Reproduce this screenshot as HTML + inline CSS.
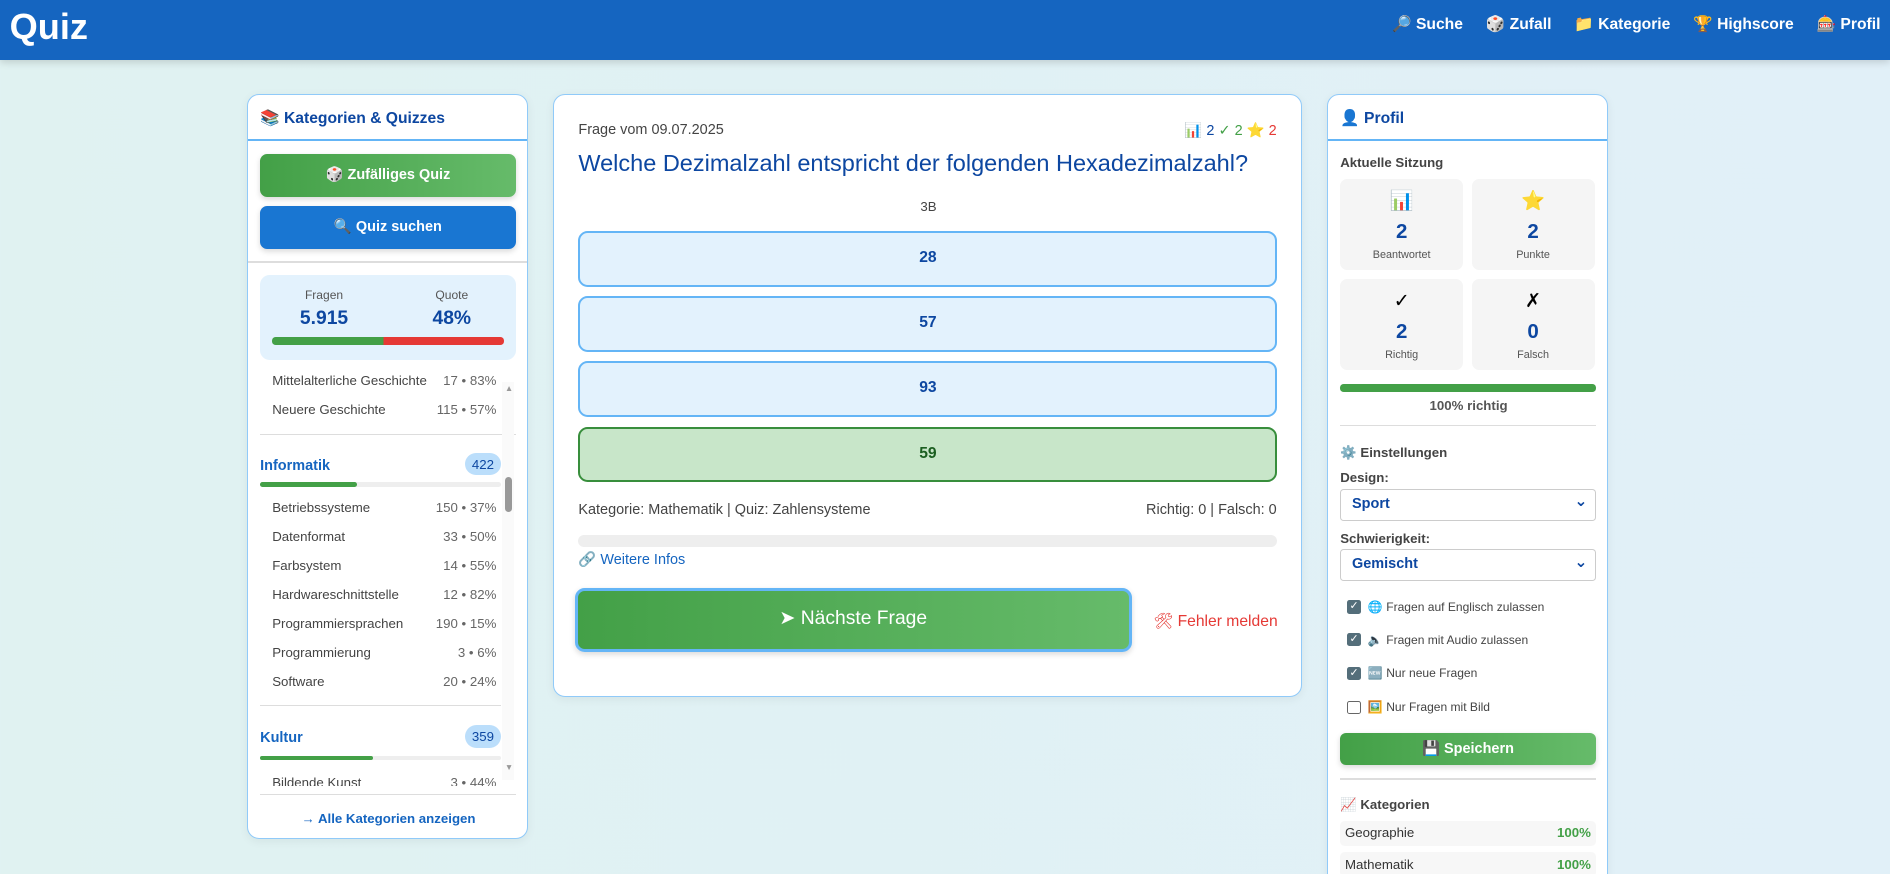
<!DOCTYPE html>
<html><head><meta charset="utf-8"><style>
*{box-sizing:border-box;margin:0;padding:0}
html,body{width:1890px;height:874px;overflow:hidden}
body{font-family:"Liberation Sans","DejaVu Sans",sans-serif;background:linear-gradient(90deg,#e0f2f1,#e1f0f8);}
#w{zoom:1.2054;width:1568px;height:725px;position:relative}
.hdr{position:absolute;left:0;top:0;width:1568px;height:50px;background:#1565c0;box-shadow:0 2px 6px rgba(0,0,0,.15)}
.logo{position:absolute;left:8px;top:5px;color:#fff;font-weight:bold;font-size:30px}
.nav{position:absolute;right:8px;top:12px;color:#fff;font-weight:bold;font-size:13px;display:flex;gap:19px}
.panel{position:absolute;background:#fff;border:1px solid #90caf9;border-radius:10px;box-shadow:0 2px 8px rgba(0,0,0,.06);overflow:hidden}
.ph{height:38px;border-bottom:2px solid #64b5f6;padding:11px 10px;font-weight:bold;font-size:13px;color:#0d47a1}
.a{position:absolute}
.btn{position:absolute;border-radius:6px;color:#fff;font-weight:bold;font-size:12px;text-align:center;box-shadow:0 2px 5px rgba(0,0,0,.15)}
.g{background:linear-gradient(90deg,#43a047,#66bb6a)}
.item{position:absolute;left:20px;width:186px;font-size:11px;color:#444;display:flex;justify-content:space-between}
.item span:last-child{color:#666}
.cat{position:absolute;left:10px;width:200px;font-size:12px;font-weight:bold;color:#1565c0}
.badge{position:absolute;right:0;top:-4px;background:#bbdefb;border-radius:10px;padding:3px 6px;font-size:11px;font-weight:normal;color:#0d47a1}
.bar{position:absolute;left:10px;width:200px;height:4px;background:#eee;border-radius:2px}
.bar i{display:block;height:4px;background:#43a047;border-radius:2px}
.hr{position:absolute;left:10px;width:212px;height:1px;background:#ddd}
.opt{position:absolute;left:20px;width:580px;height:46px;background:#e3f2fd;border:2px solid #64b5f6;border-radius:8px;text-align:center;line-height:42px;font-weight:bold;font-size:13px;color:#0d47a1}
.card{position:absolute;width:102px;height:75px;background:#f5f5f5;border-radius:6px;text-align:center}
.card .ic{margin-top:8px;font-size:16px;height:20px}
.card .n{font-size:17px;font-weight:bold;color:#0d47a1;margin-top:6px}
.card .l{font-size:9px;color:#555;margin-top:4px}
.lbl{position:absolute;left:10px;font-size:11px;font-weight:bold;color:#444}
.sel{position:absolute;left:10px;width:212px;height:26px;border:1px solid #ccc;border-radius:3px;font-size:12px;font-weight:bold;color:#0d47a1;padding:5px 9px}
.sel:after{content:"⌄";position:absolute;right:6px;top:1px;font-size:13px;font-weight:bold;color:#0d47a1}
.chk{position:absolute;left:16px;font-size:10px;color:#444;display:flex;align-items:center;gap:6px}
.chk b{display:inline-block;width:11px;height:11px;border-radius:2px;background:#546e7a;color:#fff;font-size:9px;line-height:11px;text-align:center}
.chk b.off{background:#fff;border:1px solid #666}
.row{position:absolute;left:10px;width:212px;height:21px;background:#f7f7f7;border-radius:4px;font-size:11px;color:#333;padding:4px 4px;display:flex;justify-content:space-between}
.row span:last-child{color:#43a047;font-weight:bold}
</style></head><body><div id="w">
<div class="hdr"><div class="logo">Quiz</div>
<div class="nav"><span>🔎 Suche</span><span>🎲 Zufall</span><span>📁 Kategorie</span><span>🏆 Highscore</span><span>🎰 Profil</span></div></div>

<div class="panel" style="left:205px;top:78px;width:233px;height:618px">
<div class="ph">📚 Kategorien &amp; Quizzes</div>
<div class="btn g" style="left:10px;top:49px;width:212px;height:36px;line-height:36px">🎲 Zufälliges Quiz</div>
<div class="btn" style="left:10px;top:92px;width:212px;height:36px;line-height:36px;background:#1976d2">🔍 Quiz suchen</div>
<div class="a" style="left:0;top:138px;width:233px;height:1px;background:#ddd"></div>
<div class="a" style="left:10px;top:149px;width:212px;height:71px;background:#e3f2fd;border-radius:8px">
<div class="a" style="left:0;top:11px;width:106px;text-align:center;font-size:10px;color:#555">Fragen</div>
<div class="a" style="left:106px;top:11px;width:106px;text-align:center;font-size:10px;color:#555">Quote</div>
<div class="a" style="left:0;top:28px;width:106px;text-align:center;font-size:16px;font-weight:bold;color:#0d47a1">5.915</div>
<div class="a" style="left:106px;top:28px;width:106px;text-align:center;font-size:16px;font-weight:bold;color:#0d47a1">48%</div>
<div class="a" style="left:10px;top:52px;width:192px;height:6px;border-radius:3px;background:linear-gradient(90deg,#43a047 48%,#e53935 48%)"></div>
</div>
<div class="a" style="left:0;top:228px;width:233px;height:345px;overflow:hidden">
<div class="item" style="top:3px"><span>Mittelalterliche Geschichte</span><span>17 • 83%</span></div>
<div class="item" style="top:27px"><span>Neuere Geschichte</span><span>115 • 57%</span></div>
<div class="hr" style="top:53px"></div>
<div class="cat" style="top:73px">Informatik<span class="badge">422</span></div>
<div class="bar" style="top:93px"><i style="width:40%"></i></div>
<div class="item" style="top:108px"><span>Betriebssysteme</span><span>150 • 37%</span></div>
<div class="item" style="top:132px"><span>Datenformat</span><span>33 • 50%</span></div>
<div class="item" style="top:156px"><span>Farbsystem</span><span>14 • 55%</span></div>
<div class="item" style="top:180px"><span>Hardwareschnittstelle</span><span>12 • 82%</span></div>
<div class="item" style="top:204px"><span>Programmiersprachen</span><span>190 • 15%</span></div>
<div class="item" style="top:228px"><span>Programmierung</span><span>3 • 6%</span></div>
<div class="item" style="top:252px"><span>Software</span><span>20 • 24%</span></div>
<div class="hr" style="top:278px;width:200px"></div>
<div class="cat" style="top:299px">Kultur<span class="badge">359</span></div>
<div class="bar" style="top:320px"><i style="width:47%"></i></div>
<div class="item" style="top:336px"><span>Bildende Kunst</span><span>3 • 44%</span></div>
<div class="a" style="left:211px;top:10px;width:10px;height:330px;background:#fafafa"></div>
<div class="a" style="left:213px;top:11px;font-size:7px;color:#999">▲</div>
<div class="a" style="left:213px;top:325px;font-size:7px;color:#999">▼</div>
<div class="a" style="left:213px;top:89px;width:6px;height:29px;border-radius:3px;background:#999"></div>
</div>
<div class="hr" style="top:580px"></div>
<div class="a" style="left:0;top:594px;width:233px;text-align:center;font-size:11px;font-weight:bold;color:#1565c0">→ Alle Kategorien anzeigen</div>
</div>

<div class="panel" style="left:459px;top:78px;width:621px;height:500px">
<div class="a" style="left:20px;top:22px;font-size:12px;color:#444">Frage vom 09.07.2025</div>
<div class="a" style="right:20px;top:22px;font-size:12px;color:#0d47a1">📊 2 <span style="color:#43a047">✓ 2</span> ⭐ <span style="color:#e53935">2</span></div>
<div class="a" style="left:20px;top:46px;font-size:19.5px;color:#0d47a1">Welche Dezimalzahl entspricht der folgenden Hexadezimalzahl?</div>
<div class="a" style="left:0;top:86px;width:621px;text-align:center;font-size:11px;color:#444">3B</div>
<div class="opt" style="top:113px">28</div>
<div class="opt" style="top:167px">57</div>
<div class="opt" style="top:221px">93</div>
<div class="opt" style="top:275px;background:#c8e6c9;border-color:#388e3c;color:#1b5e20">59</div>
<div class="a" style="left:20px;top:338px;font-size:12px;color:#444">Kategorie: Mathematik | Quiz: Zahlensysteme</div>
<div class="a" style="right:20px;top:338px;font-size:12px;color:#444">Richtig: 0 | Falsch: 0</div>
<div class="a" style="left:20px;top:365px;width:580px;height:10px;background:#eee;border-radius:5px"></div>
<div class="a" style="left:20px;top:378px;font-size:12px;color:#1565c0"><span style="color:#999">🔗</span> Weitere Infos</div>
<div class="btn g" style="left:17px;top:409px;width:462px;height:53px;line-height:47px;border:3px solid #64b5f6;border-radius:8px;font-size:16px;font-weight:normal">➤ Nächste Frage</div>
<div class="a" style="left:497px;top:428px;font-size:13px;color:#e53935">🛠 Fehler melden</div>
</div>

<div class="panel" style="left:1101px;top:78px;width:233px;height:660px">
<div class="ph">👤 Profil</div>
<div class="lbl" style="top:50px">Aktuelle Sitzung</div>
<div class="card" style="left:10px;top:70px"><div class="ic">📊</div><div class="n">2</div><div class="l">Beantwortet</div></div>
<div class="card" style="left:119px;top:70px"><div class="ic">⭐</div><div class="n">2</div><div class="l">Punkte</div></div>
<div class="card" style="left:10px;top:153px"><div class="ic">✓</div><div class="n">2</div><div class="l">Richtig</div></div>
<div class="card" style="left:119px;top:153px"><div class="ic">✗</div><div class="n">0</div><div class="l">Falsch</div></div>
<div class="a" style="left:10px;top:240px;width:212px;height:6px;border-radius:3px;background:#43a047"></div>
<div class="a" style="left:0;top:251px;width:233px;text-align:center;font-size:11px;font-weight:bold;color:#555">100% richtig</div>
<div class="hr" style="top:274px"></div>
<div class="lbl" style="top:290px">⚙️ Einstellungen</div>
<div class="lbl" style="top:311px">Design:</div>
<div class="sel" style="top:327px">Sport</div>
<div class="lbl" style="top:362px">Schwierigkeit:</div>
<div class="sel" style="top:377px">Gemischt</div>
<div class="chk" style="top:419px"><b>✓</b>🌐 Fragen auf Englisch zulassen</div>
<div class="chk" style="top:446px"><b>✓</b>🔈 Fragen mit Audio zulassen</div>
<div class="chk" style="top:474px"><b>✓</b>🆕 Nur neue Fragen</div>
<div class="chk" style="top:502px"><b class="off"></b>🖼️ Nur Fragen mit Bild</div>
<div class="btn g" style="left:10px;top:529px;width:212px;height:27px;line-height:27px;border-radius:5px">💾 Speichern</div>
<div class="hr" style="top:567px"></div>
<div class="lbl" style="top:582px">📈 Kategorien</div>
<div class="row" style="top:602px"><span>Geographie</span><span>100%</span></div>
<div class="row" style="top:628px"><span>Mathematik</span><span>100%</span></div>
</div>
</div></body></html>
